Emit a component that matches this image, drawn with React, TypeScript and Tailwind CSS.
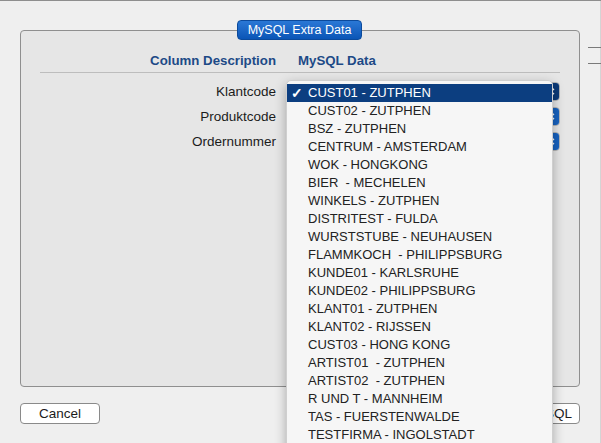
import React from 'react'

const items = [
  'CUST02 - ZUTPHEN',
  'BSZ - ZUTPHEN',
  'CENTRUM - AMSTERDAM',
  'WOK - HONGKONG',
  'BIER  - MECHELEN',
  'WINKELS - ZUTPHEN',
  'DISTRITEST - FULDA',
  'WURSTSTUBE - NEUHAUSEN',
  'FLAMMKOCH  - PHILIPPSBURG',
  'KUNDE01 - KARLSRUHE',
  'KUNDE02 - PHILIPPSBURG',
  'KLANT01 - ZUTPHEN',
  'KLANT02 - RIJSSEN',
  'CUST03 - HONG KONG',
  'ARTIST01  - ZUTPHEN',
  'ARTIST02  - ZUTPHEN',
  'R UND T - MANNHEIM',
  'TAS - FUERSTENWALDE',
  'TESTFIRMA - INGOLSTADT',
]

const fields = ['Klantcode', 'Produktcode', 'Ordernummer']

function Chevrons() {
  return (
    <svg width="7" height="11" viewBox="0 0 7 11" fill="none" stroke="white" strokeWidth="1.3">
      <path d="M1 4 L3.5 1.5 L6 4" />
      <path d="M1 7 L3.5 9.5 L6 7" />
    </svg>
  )
}

function PopupButton({ pressed }: { pressed?: boolean }) {
  return (
    <div className="flex h-[19px] w-[262px] overflow-hidden rounded-[4px] border border-[#b5b5b5] bg-white">
      <div className="flex-1" />
      <div className={`flex w-[16px] items-center justify-center ${pressed ? 'bg-[#0c3a78]' : 'bg-[#1762bf]'}`}>
        <Chevrons />
      </div>
    </div>
  )
}

export default function App() {
  return (
    <div className="relative h-[443px] w-[601px] overflow-hidden border-t border-[#8e8e8e] bg-[#efefef] font-['Liberation_Sans',Arial,sans-serif] text-[13px] text-[#1b1b1b]">
      {/* window edge on the right */}
      <div className="absolute right-0 top-0 h-full w-px bg-[#d4d4d4]" />
      <div className="absolute right-0 top-[46px] h-px w-[13px] bg-[#7a7a7a]" />
      <div className="absolute right-0 top-[62px] h-px w-[13px] bg-[#7a7a7a]" />

      {/* group box */}
      <div className="relative mx-[20px] mt-[29px] h-[357px] w-[560px] rounded-[4px] border border-[#8f8f8f] bg-[#e6e6e6]">
        <div className="absolute left-[216px] top-[-11px] flex h-[20px] w-[125px] items-center justify-center rounded-[4px] border border-[#0b4a9c] bg-gradient-to-b from-[#2a78d6] to-[#0a55b6] text-[12.5px] text-white">
          MySQL Extra Data
        </div>

        <div className="grid grid-cols-[255px_1fr] gap-x-[22px] pt-[21px] text-[13.25px] font-bold leading-[17px] text-[#1d4a86]">
          <div className="text-right">Column Description</div>
          <div>MySQL Data</div>
        </div>
        <div className="mx-[19px] mt-[3px] h-px w-[520px] bg-[#bdbdbd]" />

        <div className="mt-[9px] flex flex-col gap-[6px]">
          {fields.map((f, i) => (
            <div key={f} className="grid grid-cols-[255px_1fr] items-center gap-x-[22px]">
              <div className="text-right text-[13.5px] leading-[19px]">{f}</div>
              <PopupButton pressed={i === 0} />
            </div>
          ))}
        </div>
      </div>

      {/* bottom buttons */}
      <div className="mt-[16px] flex justify-between pl-[20px] pr-[21px]">
        <button className="h-[21px] w-[80px] rounded-[4px] border border-[#8a8a8a] bg-white text-[13.5px] leading-[19px]">
          Cancel
        </button>
        <button className="h-[21px] rounded-[4px] border border-[#8a8a8a] bg-white px-[7px] text-[13.5px] leading-[19px]">
          Save to MySQL
        </button>
      </div>

      {/* open popup menu */}
      <div className="absolute left-[286px] top-[79px] h-[390px] w-[267px] rounded-[5px] border border-[#cfcfcf] bg-[#f6f6f6] pt-[3px] text-[13px] shadow-[0_4px_12px_rgba(0,0,0,0.3)]">
        <div className="flex h-[18px] items-center bg-[#0c3e80] pl-[4px] text-white">
          <span className="w-[17px] text-[14px] font-bold">✓</span>
          <span className="whitespace-pre">CUST01 - ZUTPHEN</span>
        </div>
        {items.map((it) => (
          <div key={it} className="flex h-[18px] items-center whitespace-pre pl-[21px] text-[#222]">
            {it}
          </div>
        ))}
      </div>
    </div>
  )
}
